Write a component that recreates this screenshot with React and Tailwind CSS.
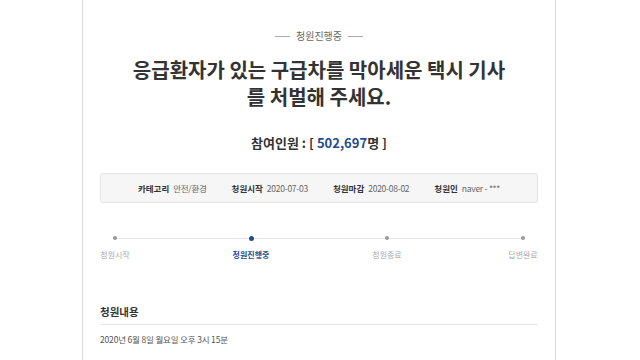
const font = { fontFamily: '"Noto Sans CJK KR", "Noto Sans", sans-serif' };

const steps = [
  { label: '청원시작', active: false },
  { label: '청원진행중', active: true },
  { label: '청원종료', active: false },
  { label: '답변완료', active: false },
];

const info = [
  ['카테고리', '안전/환경'],
  ['청원시작', '2020-07-03'],
  ['청원마감', '2020-08-02'],
  ['청원인', 'naver - ***'],
];

export default function App() {
  return (
    <div className="bg-white h-[360px] overflow-hidden" style={font}>
      <div className="ml-[82px] w-[474px] h-[360px] border-x border-[#dddddd] px-[17px] pt-[29px]">
        {/* 상태 */}
        <div className="flex items-center justify-center gap-[6px] text-[10px] leading-[14px] text-[#666]">
          <span className="w-[15px] h-px bg-[#aaa]" />
          <span>청원진행중</span>
          <span className="w-[15px] h-px bg-[#aaa]" />
        </div>

        {/* 제목 */}
        <h1 className="mt-[13px] text-center text-[20px] leading-[27px] font-bold text-[#333]">
          응급환자가 있는 구급차를 막아세운 택시 기사
          <br />를 처벌해 주세요.
        </h1>

        {/* 참여인원 */}
        <p className="mt-[24px] text-center text-[13px] leading-[18px] font-bold text-[#333]">
          참여인원 : [ <span className="text-[#1f4e8c]">502,697</span>명 ]
        </p>

        {/* 정보 박스 */}
        <div className="mt-[21px] h-[30px] flex items-center justify-center gap-[25px] bg-[#f6f6f6] border border-[#e4e4e4] rounded-[3px] text-[8.5px] leading-[12px]">
          {info.map(([k, v]) => (
            <div key={k} className="flex items-center gap-[4px]">
              <span className="font-bold text-[#333]">{k}</span>
              <span className="text-[#666] tracking-[-0.03em]">{v}</span>
            </div>
          ))}
        </div>

        {/* 진행 단계 */}
        <div className="relative mt-[32px] flex justify-between">
          <div className="absolute left-[15px] right-[15px] top-[3px] h-px bg-[#e6e6e6]" />
          {steps.map((s) => (
            <div key={s.label} className="relative w-[30px] flex flex-col items-center">
              <div className="h-[6px] flex items-center">
                <span
                  className={
                    s.active
                      ? 'w-[5px] h-[5px] rounded-full bg-[#1f4e8c]'
                      : 'w-[4px] h-[4px] rounded-full bg-[#999]'
                  }
                />
              </div>
              <span
                className={
                  s.active
                    ? 'mt-[8px] whitespace-nowrap text-[8px] leading-[12px] font-bold text-[#1f4e8c]'
                    : 'mt-[8px] whitespace-nowrap text-[8px] leading-[12px] text-[#aaa]'
                }
              >
                {s.label}
              </span>
            </div>
          ))}
        </div>

        {/* 청원내용 */}
        <div className="mt-[43px] pb-[4px] border-b border-[#e6e6e6]">
          <h2 className="text-[10.5px] leading-[16px] font-bold text-[#333]">청원내용</h2>
        </div>
        <p className="mt-[8px] text-[8.5px] leading-[12px] text-[#555] tracking-[-0.02em]">2020년 6월 8일 월요일 오후 3시 15분</p>
      </div>
    </div>
  );
}
